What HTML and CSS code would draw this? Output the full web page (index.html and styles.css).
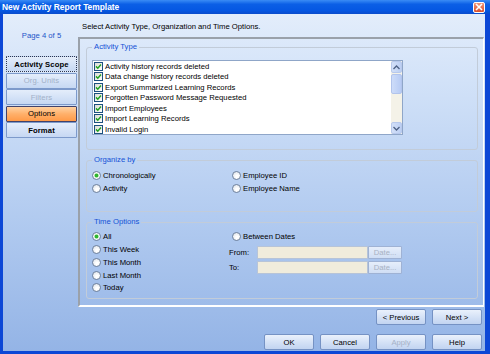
FILE: index.html
```html
<!DOCTYPE html>
<html lang="en">
  <head>
    <meta charset="UTF-8" />
    <meta name="viewport" content="width=device-width, initial-scale=1.0" />
    <title>New Activity Report Template</title>
    <link rel="stylesheet" href="styles.css">
  </head>
  <body>
    <div class="window">
      <header class="titlebar">
        <span class="title">New Activity Report Template</span>
        <span class="close">
          <svg width="8" height="8" viewBox="0 0 8 8"><path d="M1 1 L7 7 M7 1 L1 7" stroke="#fff" stroke-width="1.6"/></svg>
        </span>
      </header>
      <div class="frame">
        <aside class="side">
          <p class="page">Page 4 of 5</p>
          <nav class="steps">
            <button class="step current">Activity Scope</button>
            <button class="step" disabled>Org. Units</button>
            <button class="step" disabled>Filters</button>
            <button class="step active">Options</button>
            <button class="step">Format</button>
          </nav>
        </aside>
        <main class="content">
          <p class="intro">Select Activity Type, Organization and Time Options.</p>
          <section class="panel">
            <fieldset class="group activity">
              <legend>Activity Type</legend>
              <div class="listbox">
                <ul class="items">
                  <li><span class="check"><svg width="7" height="7" viewBox="0 0 7 7"><path d="M1 3.4 L2.8 5.2 L6 1.6" fill="none" stroke="#21a121" stroke-width="1.5"/></svg></span>Activity history records deleted</li>
                  <li><span class="check"><svg width="7" height="7" viewBox="0 0 7 7"><path d="M1 3.4 L2.8 5.2 L6 1.6" fill="none" stroke="#21a121" stroke-width="1.5"/></svg></span>Data change history records deleted</li>
                  <li><span class="check"><svg width="7" height="7" viewBox="0 0 7 7"><path d="M1 3.4 L2.8 5.2 L6 1.6" fill="none" stroke="#21a121" stroke-width="1.5"/></svg></span>Export Summarized Learning Records</li>
                  <li><span class="check"><svg width="7" height="7" viewBox="0 0 7 7"><path d="M1 3.4 L2.8 5.2 L6 1.6" fill="none" stroke="#21a121" stroke-width="1.5"/></svg></span>Forgotten Password Message Requested</li>
                  <li><span class="check"><svg width="7" height="7" viewBox="0 0 7 7"><path d="M1 3.4 L2.8 5.2 L6 1.6" fill="none" stroke="#21a121" stroke-width="1.5"/></svg></span>Import Employees</li>
                  <li><span class="check"><svg width="7" height="7" viewBox="0 0 7 7"><path d="M1 3.4 L2.8 5.2 L6 1.6" fill="none" stroke="#21a121" stroke-width="1.5"/></svg></span>Import Learning Records</li>
                  <li><span class="check"><svg width="7" height="7" viewBox="0 0 7 7"><path d="M1 3.4 L2.8 5.2 L6 1.6" fill="none" stroke="#21a121" stroke-width="1.5"/></svg></span>Invalid Login</li>
                </ul>
                <div class="scrollbar">
                  <span class="arrow">
                    <svg width="7" height="5" viewBox="0 0 7 5"><path d="M0.5 4 L3.5 1 L6.5 4" fill="none" stroke="#4d6185" stroke-width="1.3"/></svg>
                  </span>
                  <span class="thumb"></span>
                  <span class="track"></span>
                  <span class="arrow">
                    <svg width="7" height="5" viewBox="0 0 7 5"><path d="M0.5 1 L3.5 4 L6.5 1" fill="none" stroke="#4d6185" stroke-width="1.3"/></svg>
                  </span>
                </div>
              </div>
            </fieldset>

            <fieldset class="group organize">
              <legend>Organize by</legend>
              <div class="cols">
                <div class="col">
                  <label class="opt"><span class="radio on"></span>Chronologically</label>
                  <label class="opt"><span class="radio"></span>Activity</label>
                </div>
                <div class="col">
                  <label class="opt"><span class="radio"></span>Employee ID</label>
                  <label class="opt"><span class="radio"></span>Employee Name</label>
                </div>
              </div>
            </fieldset>

            <fieldset class="group time">
              <legend>Time Options</legend>
              <div class="cols">
                <div class="col">
                  <label class="opt"><span class="radio on"></span>All</label>
                  <label class="opt"><span class="radio"></span>This Week</label>
                  <label class="opt"><span class="radio"></span>This Month</label>
                  <label class="opt"><span class="radio"></span>Last Month</label>
                  <label class="opt"><span class="radio"></span>Today</label>
                </div>
                <div class="col">
                  <label class="opt"><span class="radio"></span>Between Dates</label>
                  <div class="daterow">
                    <span class="datelabel">From:</span>
                    <span class="datefield"></span>
                    <button class="datebtn" disabled>Date...</button>
                  </div>
                  <div class="daterow">
                    <span class="datelabel">To:</span>
                    <span class="datefield"></span>
                    <button class="datebtn" disabled>Date...</button>
                  </div>
                </div>
              </div>
            </fieldset>
          </section>
          <div class="footer">
            <div class="btnrow">
              <button class="btn">&lt; Previous</button>
              <button class="btn">Next &gt;</button>
            </div>
            <div class="btnrow">
              <button class="btn">OK</button>
              <button class="btn">Cancel</button>
              <button class="btn" disabled>Apply</button>
              <button class="btn">Help</button>
            </div>
          </div>
        </main>
      </div>
    </div>
  </body>
</html>
```

FILE: styles.css
```css
* {
  box-sizing: border-box;
}
body {
  margin: 0;
  font-family: "Liberation Sans", Arial, sans-serif;
  font-size: 7.7px;
  color: #000;
}
p {
  margin: 0;
}
button {
  font-family: inherit;
  font-size: inherit;
  padding: 0;
  cursor: pointer;
}
.window {
  width: 490px;
  height: 354px;
  overflow: hidden;
}
.titlebar {
  height: 14px;
  display: flex;
  align-items: center;
  justify-content: space-between;
  padding: 0 5px 0 2px;
  background: linear-gradient(#3a8cf5, #0b5fe6 30%, #0557e2 75%, #0a4ccc);
}
.title {
  color: #fff;
  font-weight: bold;
  font-size: 8.4px;
}
.close {
  width: 12px;
  height: 11px;
  display: flex;
  align-items: center;
  justify-content: center;
  border: 1px solid #fff;
  border-radius: 2px;
  background: linear-gradient(#f0967a, #d9502e);
}
.frame {
  height: 340px;
  display: flex;
  border-left: 3px solid #0c47d6;
  border-right: 5px solid #0c47d6;
  border-bottom: 3px solid #0c47d6;
  background: linear-gradient(#e3edfb, #d2e2f8 20%, #b2cbf0 60%, #94b4e6);
}
/* venstre kolonne */
.side {
  width: 75px;
  padding: 0 1px 0 3px;
}
.page {
  margin-top: 17px;
  line-height: 10px;
  text-align: center;
  color: #2456c9;
}
.steps {
  margin-top: 15px;
  display: flex;
  flex-direction: column;
  gap: 0.5px;
}
.step {
  height: 16px;
  border: 1px solid #7d9acb;
  border-radius: 1px;
  background: linear-gradient(#e4edfb, #c6d8f3);
  color: #000;
  font-weight: bold;
  letter-spacing: 0.1px;
}
.step:disabled {
  color: #a2b1c8;
  font-weight: normal;
}
.step.current {
  border: 1px dotted #2b3550;
}
.step.active {
  border-color: #41426a;
  background: linear-gradient(#ffd2a2, #ffb06a 50%, #ff9a48);
  font-weight: normal;
}
/* indhold */
.content {
  width: 407px;
  display: flex;
  flex-direction: column;
}
.intro {
  height: 23px;
  padding: 2px 0 0 4px;
  line-height: 21px;
}
.panel {
  width: 406px;
  height: 270px;
  padding: 3px 5px 0 6px;
  border-top: 2px solid #9aa1aa;
  border-left: 2px solid #9aa1aa;
  border-right: 1px solid #fff;
  border-bottom: 2px solid #fff;
}
.group {
  margin: 0;
  padding: 0 5px;
  border: 1px solid #c2ccd9;
  border-radius: 3px;
  min-width: 0;
}
.group legend {
  padding: 0 2px;
  margin-left: 0;
  line-height: 10px;
  color: #1552d6;
}
.activity {
  padding-top: 8px;
  padding-bottom: 14px;
}
.organize {
  margin-top: 5px;
  padding-top: 4px;
  padding-bottom: 16px;
}
.time {
  margin-top: 5px;
  padding-top: 3.5px;
  padding-bottom: 4px;
}
.listbox {
  width: 311px;
  height: 75px;
  display: flex;
  border: 1px solid #8fa6c8;
  background: #fff;
}
.items {
  flex: 1;
  margin: 0;
  padding: 0 0 0 1px;
  list-style: none;
}
.items li {
  height: 10.5px;
  display: flex;
  align-items: center;
  gap: 2px;
}
.check {
  width: 9px;
  height: 9px;
  display: flex;
  align-items: center;
  justify-content: center;
  border: 1px solid #1c5180;
  background: linear-gradient(135deg, #dcdcd4, #fff);
}
.scrollbar {
  width: 11px;
  display: flex;
  flex-direction: column;
  background: #f4f2e8;
}
.arrow {
  height: 12px;
  display: flex;
  align-items: center;
  justify-content: center;
  border: 1px solid #b8c9ec;
  border-radius: 2px;
  background: linear-gradient(90deg, #d3e0f8, #bccff3);
}
.thumb {
  height: 20px;
  margin-top: 1px;
  border: 1px solid #b2c4ec;
  border-radius: 2px;
  background: linear-gradient(90deg, #cddcf9, #b7cbf4);
}
.track {
  flex: 1;
}
.cols {
  display: grid;
  grid-template-columns: 140px 1fr;
}
.opt {
  height: 12.75px;
  display: flex;
  align-items: center;
  gap: 2px;
  font-weight: normal;
}
.organize .opt {
  height: 13px;
}
.radio {
  width: 9px;
  height: 9px;
  border: 1px solid #6f819c;
  border-radius: 50%;
  background: radial-gradient(circle at 60% 65%, #fff 20%, #dde2e8 90%);
}
.radio.on {
  background: radial-gradient(circle, #2fb52f 0 1.5px, #9ee09e 2px, #fff 2.5px, #dde2e8 95%);
}
.daterow {
  display: flex;
  align-items: center;
  height: 13px;
  margin: 2.5px 0 0 -3px;
}
.datelabel {
  width: 28px;
}
.datefield {
  width: 111px;
  height: 13px;
  border: 1px solid #b7c4d8;
  background: #f0ecdc;
}
.datebtn {
  width: 34px;
  height: 13px;
  border: 1px solid #9fb2d4;
  border-radius: 1px;
  background: linear-gradient(#e6eefb, #d0def4);
  color: #a7b1c2;
}
/* knapper nederst */
.footer {
  display: flex;
  flex-direction: column;
  gap: 9px;
  padding: 2px 3px 0 0;
}
.btnrow {
  display: flex;
  justify-content: flex-end;
  gap: 6px;
}
.btn {
  width: 50px;
  height: 16px;
  border: 1px solid #7592c4;
  border-radius: 2px;
  background: linear-gradient(#eaf1fc, #d1dff5 60%, #c2d4f1);
  color: #000;
}
.btn:disabled {
  color: #a5b1c6;
}
```
